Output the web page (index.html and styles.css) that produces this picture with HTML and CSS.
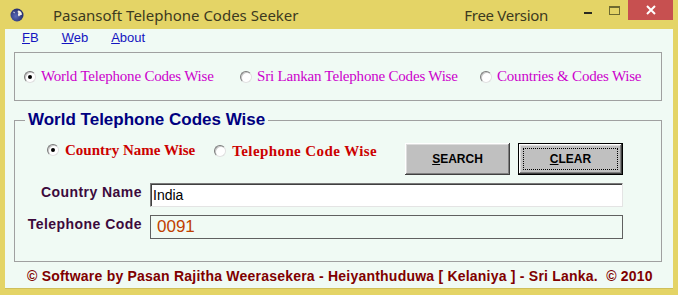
FILE: index.html
```html
<!DOCTYPE html>
<html lang="en">
<head>
    <meta charset="UTF-8">
    <meta name="viewport" content="width=device-width, initial-scale=1.0">
    <title>Pasansoft Telephone Codes Seeker</title>
    <link rel="stylesheet" href="styles.css">
</head>
<body>

    <div class="window">
        <!-- Title bar -->
        <div class="titlebar">
            <svg class="app-icon" width="14" height="14" viewBox="0 0 14 14">
                <defs>
                    <radialGradient id="globe" cx="0.4" cy="0.6" r="0.7">
                        <stop offset="0" stop-color="#5a6ab8"/>
                        <stop offset="1" stop-color="#1c2260"/>
                    </radialGradient>
                </defs>
                <circle cx="7" cy="7" r="6.5" fill="url(#globe)"/>
                <path d="M8 2.5 C10 2.5 11.8 4 12 6.5 C11 7.5 9.5 7 9 8.5 C8 8 7.5 6 8.5 5 C7.5 4.5 7.5 3.5 8 2.5 Z" fill="#f4f2e8"/>
                <path d="M3 4 C4 3.5 5 4 5 5 C4 5.5 3.5 5 3 4 Z" fill="#c8c8d8"/>
            </svg>
            <span class="title">Pasansoft Telephone Codes Seeker</span>
            <span class="edition">Free Version</span>
            <div class="controls">
                <span class="ctl ctl-min"><i></i></span>
                <span class="ctl ctl-max"><i></i></span>
                <span class="ctl ctl-close">
                    <svg width="10" height="10" viewBox="0 0 10 10">
                        <path d="M1 1 L9 9 M9 1 L1 9" stroke="#fff" stroke-width="2"/>
                    </svg>
                </span>
            </div>
        </div>

        <div class="client">
            <!-- Menu -->
            <div class="menu">
                <span><u>F</u>B</span>
                <span><u>W</u>eb</span>
                <span><u>A</u>bout</span>
            </div>

            <!-- Mode selector -->
            <div class="mode-box">
                <label class="opt"><span class="radio checked"></span>World Telephone Codes Wise</label>
                <label class="opt"><span class="radio"></span>Sri Lankan Telephone Codes Wise</label>
                <label class="opt"><span class="radio"></span>Countries &amp; Codes Wise</label>
            </div>

            <!-- Search group -->
            <fieldset class="search-box">
                <legend>World Telephone Codes Wise</legend>
                <div class="search-top">
                    <div class="search-opts">
                        <label class="sopt"><span class="radio checked"></span>Country Name Wise</label>
                        <label class="sopt low"><span class="radio"></span>Telephone Code Wise</label>
                    </div>
                    <div class="buttons">
                        <button class="btn"><u>S</u>EARCH</button>
                        <button class="btn focused"><u>C</u>LEAR</button>
                    </div>
                </div>
                <div class="field-row">
                    <span class="field-label">Country Name</span>
                    <input class="field-input" type="text" value="India">
                </div>
                <div class="field-row">
                    <span class="field-label">Telephone Code</span>
                    <div class="field-result">0091</div>
                </div>
            </fieldset>

            <div class="footer">© Software by Pasan Rajitha Weerasekera - Heiyanthuduwa [ Kelaniya ] - Sri Lanka.&nbsp; © 2010</div>
        </div>
    </div>

</body>
</html>
```

FILE: styles.css
```css
body {
    margin: 0;
    background: #e4d466;
    font-family: "Liberation Sans", Arial, sans-serif;
}
.window {
    width: 678px;
    height: 295px;
    background: #e4d466;
    overflow: hidden;
}
/* Title bar */
.titlebar {
    display: flex;
    align-items: center;
    height: 29px;
}
.app-icon {
    margin-left: 10px;
    margin-top: 1px;
}
.title {
    margin-left: 29px;
    font-family: "Noto Sans", sans-serif;
    font-size: 15px;
    color: #3c3a20;
}
.edition {
    margin-left: auto;
    margin-right: 26px;
    font-family: "Noto Sans", sans-serif;
    font-size: 15px;
    letter-spacing: -0.3px;
    color: #3c3a20;
}
.controls {
    display: flex;
    align-self: flex-start;
    margin-right: 5px;
}
.ctl {
    display: flex;
    align-items: center;
    justify-content: center;
    width: 27px;
    height: 20px;
}
.ctl-min i {
    width: 8px;
    height: 2px;
    margin-top: 6px;
    background: #2a2a20;
}
.ctl-max i {
    width: 9px;
    height: 6px;
    border: 1px solid #6e6a30;
    border-top-width: 2px;
}
.ctl-close {
    width: 45px;
    background: #c75050;
}
/* Client area */
.client {
    margin-left: 5px;
    width: 668px;
    height: 260px;
    background: #f0faf4;
    border-bottom: 1px solid #cfbf5a;
    box-sizing: border-box;
}
.menu {
    display: flex;
    gap: 23px;
    padding-left: 17px;
    height: 18px;
    line-height: 18px;
    font-size: 13px;
    color: #1414c0;
}
.mode-box {
    display: grid;
    grid-template-columns: 216px 240px auto;
    align-items: center;
    margin: 5px 0 0 9px;
    width: 648px;
    height: 49px;
    padding-left: 9px;
    box-sizing: border-box;
    border: 1px solid #a0a0a0;
}
.opt {
    display: flex;
    align-items: center;
    gap: 5px;
    font-family: "Liberation Serif", "Times New Roman", serif;
    font-size: 15px;
    letter-spacing: -0.2px;
    color: #cc00cc;
}
.radio {
    position: relative;
    width: 10px;
    height: 10px;
    border-radius: 50%;
    background: #fff;
    border: 1px solid;
    border-color: #7a7a7a #e0e0e0 #e0e0e0 #7a7a7a;
    box-shadow: inset 1px 1px 0 #c8c8c8;
    flex-shrink: 0;
}
.radio.checked::after {
    content: "";
    position: absolute;
    left: 3px;
    top: 3px;
    width: 4px;
    height: 4px;
    border-radius: 50%;
    background: #000;
}
/* Search group */
.search-box {
    margin: 9px 0 0 9px;
    width: 648px;
    padding: 0 38px 22px 0;
    box-sizing: border-box;
    border: 1px solid #a0a0a0;
}
.search-box legend {
    margin-left: 10px;
    padding: 0 3px;
    font-size: 17px;
    line-height: 20px;
    font-weight: bold;
    color: #000080;
}
.search-top {
    display: flex;
    align-items: flex-start;
    padding: 10px 0 0 32px;
}
.search-opts {
    display: flex;
    gap: 19px;
}
.sopt {
    display: flex;
    align-items: center;
    gap: 6px;
    line-height: 18px;
    font-family: "Liberation Serif", "Times New Roman", serif;
    font-size: 15px;
    font-weight: bold;
    color: #cc0000;
}
.sopt.low {
    margin-top: 2px;
    letter-spacing: 0.4px;
}
.buttons {
    display: flex;
    gap: 8px;
    margin: 3px 0 0 auto;
}
.btn {
    width: 105px;
    height: 32px;
    padding: 0;
    border: none;
    background: #c0c0c0;
    font-family: "Liberation Sans", Arial, sans-serif;
    font-size: 12px;
    font-weight: bold;
    color: #000;
    box-shadow: inset -1px -1px #404040, inset 1px 1px #fff, inset -2px -2px #808080, inset 2px 2px #dcdcdc;
}
.btn.focused {
    border: 1px solid #000;
    outline: 1px dotted #000;
    outline-offset: -6px;
}
.field-row {
    display: grid;
    grid-template-columns: 127px 1fr;
    gap: 8px;
    margin-top: 8px;
}
.field-label {
    text-align: right;
    font-size: 14px;
    letter-spacing: 0.45px;
    line-height: 18px;
    font-weight: bold;
    color: #3c0a3c;
}
.field-input {
    height: 24px;
    margin: 0;
    padding: 0 0 0 2px;
    box-sizing: border-box;
    border: 1px solid;
    border-color: #7a7a7a #e4e4e4 #e4e4e4 #7a7a7a;
    box-shadow: inset 1px 1px #404040;
    background: #fff;
    font-family: "Liberation Sans", Arial, sans-serif;
    font-size: 14px;
    color: #000;
}
.field-result {
    height: 24px;
    box-sizing: border-box;
    padding-left: 6px;
    border: 1px solid #606060;
    font-size: 17px;
    line-height: 22px;
    color: #c04000;
}
.footer {
    padding: 6px 0 0 22px;
    font-size: 14px;
    letter-spacing: 0.22px;
    font-weight: bold;
    color: #800000;
}
```
